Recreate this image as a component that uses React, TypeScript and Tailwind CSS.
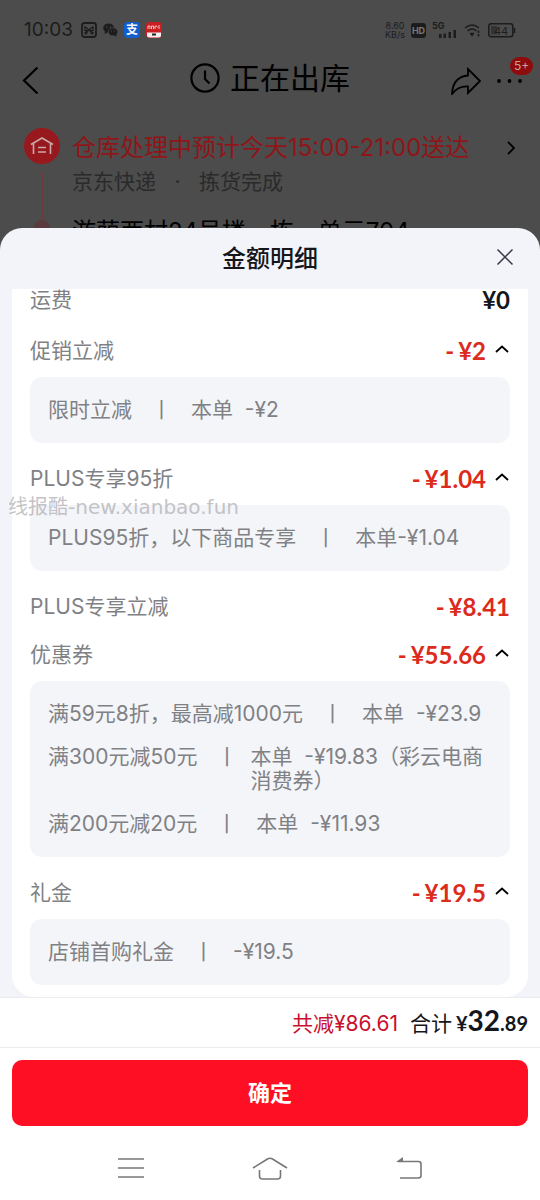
import type { ReactNode } from 'react';

type Detail = { label: string; value: string; narrow?: boolean };
type Item = { label: string; amount: string; details?: Detail[]; mark?: string };

const items: Item[] = [
  { label: '促销立减', amount: '¥2', details: [{ label: '限时立减', value: '本单  -¥2' }] },
  {
    label: 'PLUS专享95折',
    amount: '¥1.04',
    mark: '线报酷-new.xianbao.fun',
    details: [{ label: 'PLUS95折，以下商品专享', value: '本单-¥1.04' }],
  },
  { label: 'PLUS专享立减', amount: '¥8.41' },
  {
    label: '优惠券',
    amount: '¥55.66',
    details: [
      { label: '满59元8折，最高减1000元', value: '本单  -¥23.9' },
      { label: '满300元减50元', value: '本单  -¥19.83（彩云电商消费券）', narrow: true },
      { label: '满200元减20元', value: '本单  -¥11.93' },
    ],
  },
  { label: '礼金', amount: '¥19.5', details: [{ label: '店铺首购礼金', value: '-¥19.5' }] },
];

function StatusBar() {
  return (
    <div className="flex h-14 items-center px-6 pt-1 text-[#1c1c1c]">
      <span className="text-[19px] leading-6">10:03</span>
      <svg className="ml-2 h-4 w-4" viewBox="0 0 16 16" fill="none" stroke="currentColor">
        <rect x="1" y="1" width="14" height="14" rx="2.5" strokeWidth="1.8" />
        <path d="M4 4.5 12 11.5M12 4.5 4 11.5M4 4v4.5h3M12 4v4.5H9" strokeWidth="1.2" />
        <circle cx="5" cy="11" r="1.2" />
        <circle cx="11" cy="11" r="1.2" />
      </svg>
      <svg className="ml-1.5 h-4 w-[15px]" viewBox="0 0 15 16">
        <ellipse cx="5.6" cy="6" rx="5.4" ry="4.6" fill="currentColor" />
        <path d="M2 9 1.6 12l3-1.6z" fill="currentColor" />
        <ellipse cx="10" cy="9.8" rx="4.8" ry="4" fill="currentColor" stroke="#4c4c4c" strokeWidth=".7" />
        <path d="m11 13 2.6 1.8-.4-2.6z" fill="currentColor" />
        <g fill="#4c4c4c">
          <circle cx="3.8" cy="5" r=".7" />
          <circle cx="7.4" cy="5" r=".7" />
          <circle cx="8.5" cy="9" r=".6" />
          <circle cx="11.6" cy="9" r=".6" />
        </g>
      </svg>
      <span className="ml-1.5 flex h-4 w-4 items-center justify-center rounded-sm bg-[#0f5fd0] text-xs font-bold text-gray-100">支</span>
      <svg className="ml-1.5 h-4 w-4 rounded bg-[#c91f22]" viewBox="0 0 16 16">
        <path d="M2 7V4h2v3M5.5 7V4h2v3M9 7V4h1.500l1 1.500M13 3v4" stroke="#f0c0c0" fill="none" />
        <path d="M1 10.500h14v3q0 2-2 2H3q-2 0-2-2z" fill="#f0eeee" />
        <rect x="6" y="11.500" width="4" height="2" fill="#222" />
      </svg>
      <span className="ml-auto flex flex-col items-center text-[9px] leading-[9px]">
        <span>8.60</span>
        <span>KB/s</span>
      </span>
      <span className="ml-1.5 flex h-[15px] w-[15px] items-center justify-center rounded-[3px] bg-[#1c1c1c] text-[9px] leading-none font-bold text-[#777]">HD</span>
      <svg className="ml-1.5 h-[18px] w-6" viewBox="0 0 24 18" fill="currentColor">
        <text x="0" y="8" fontSize="9" fontWeight="700">5G</text>
        <path d="M7 13h2.500v4H7zM11.500 12.500H14V17h-2.500zM16.500 11H19v6h-2.500zM21.500 9H24v8h-2.500z" />
      </svg>
      <svg className="ml-2 h-4 w-[18px]" viewBox="0 0 18 16" fill="none" stroke="currentColor" strokeWidth="1.600">
        <path d="M1 6q7-6 14 0M3.500 9q4.500-4 9 0" />
        <path d="m5.500 11.500 2.500 3 2.500-3q-2.500-2-5 0z" fill="currentColor" stroke="none" />
        <path d="M14.500 8.500v2.500M14.500 12v2.500" />
      </svg>
      <svg className="ml-1.5 h-[15px] w-7" viewBox="0 0 28 15">
        <rect x=".800" y=".800" width="24" height="13" rx="2.500" fill="none" stroke="currentColor" strokeWidth="1.500" />
        <path d="M3 3h6v8.500H3z" fill="#333" />
        <path d="M26.500 5v5" stroke="currentColor" strokeWidth="1.500" />
        <text x="6" y="11.500" fontSize="11" fill="currentColor">44</text>
      </svg>
    </div>
  );
}

function OrderPage() {
  return (
    <div className="h-[252px] overflow-hidden bg-[#4c4c4c] text-black">
      <StatusBar />
      <header className="flex h-11 items-center justify-between px-4">
        <button aria-label="返回" className="flex w-[74px] pl-1">
          <svg className="mt-1 h-7 w-5" viewBox="0 0 20 28" fill="none" stroke="currentColor" strokeWidth="2.200">
            <path d="M17.500 1.500 4 14.500l13.500 13" />
          </svg>
        </button>
        <h1 className="flex items-center gap-2.5 text-[30px] leading-10">
          <svg className="h-[30px] w-[30px]" viewBox="0 0 30 30" fill="none" stroke="currentColor" strokeWidth="2.200">
            <circle cx="15" cy="15" r="13.600" />
            <path d="M15 7.500V16l4.500 4.500" />
          </svg>
          正在出库
        </h1>
        <div className="flex w-[74px] items-center gap-3.5 pt-1.5">
          <button aria-label="分享">
            <svg className="h-7 w-8" viewBox="0 0 32 28" fill="none" stroke="currentColor" strokeWidth="1.800" strokeLinejoin="miter">
              <path d="M18 2v6.500C7 9.500 2.500 17 2 27q6-8 16-7.500V26l12-12z" />
            </svg>
          </button>
          <button aria-label="更多" className="relative">
            <svg className="h-6 w-7" viewBox="0 0 28 24" fill="currentColor">
              <circle cx="3" cy="12" r="1.900" />
              <circle cx="13.500" cy="12" r="1.900" />
              <circle cx="24" cy="12" r="1.900" />
            </svg>
            <span className="absolute -top-3 left-3.5 flex h-[18px] w-[23px] items-center justify-center rounded-full bg-[#8f0c0c] text-xs text-[#c9a0a0]">5+</span>
          </button>
        </div>
      </header>
      <div className="flex px-6 pt-7">
        <div className="flex w-9 flex-col items-center">
          <span className="flex h-9 w-9 shrink-0 items-center justify-center rounded-full bg-[#98191d]">
            <svg className="h-6 w-6" viewBox="0 0 24 24" fill="none" stroke="#c9a8a8" strokeWidth="1.600">
              <path d="M1 10.500 12 4l11 6.500M3.500 9.500V20M20.500 9.500V20M8 13.500h8M8 18h8" />
            </svg>
          </span>
          <span className="mt-2 h-12 w-px bg-[#6b3a3c]" />
          <span className="h-4 w-4 shrink-0 rounded-full bg-[#5a3a3c]" />
        </div>
        <div className="ml-3 flex-1">
          <a href="#delivery" className="flex items-center justify-between text-2xl leading-10 text-[#8f1518]">
            仓库处理中预计今天15:00-21:00送达
            <svg className="h-3.5 w-2.5" viewBox="0 0 10 14" fill="none" stroke="black" strokeWidth="1.800">
              <path d="m2 1 6 6-6 6" />
            </svg>
          </a>
          <p className="text-[21px] leading-7 whitespace-pre text-[#2a2a2a]">京东快递<span className="inline-block w-[43px] text-center">·</span>拣货完成</p>
          <p className="mt-5 text-2xl leading-8">游荫西村24号楼一栋一单元704</p>
        </div>
      </div>
    </div>
  );
}

function Row({ label, children }: { label: string; children: ReactNode }) {
  return (
    <div className="flex h-12 items-center justify-between">
      <span>{label}</span>
      <span className="flex items-center font-['Lato','Noto_Sans_CJK_SC',sans-serif] text-2xl leading-8 font-bold">{children}</span>
    </div>
  );
}

function PriceItem({ item }: { item: Item }) {
  return (
    <section className="relative">
      <Row label={item.label}>
        <span className="flex gap-1 text-[#dc2b1c]">
          <span>-</span>
          {item.amount}
        </span>
        {item.details && (
          <button aria-label="收起" className="ml-2 flex h-8 w-4 justify-center pt-2.5 text-black">
            <svg className="h-2 w-3.5" viewBox="0 0 14 8" fill="none" stroke="currentColor" strokeWidth="1.800">
              <path d="m1 7 6-5.500L13 7" />
            </svg>
          </button>
        )}
      </Row>
      {item.details && (
        <div className="mt-0.5 mb-3 flex flex-col gap-[19px] rounded-xl bg-[#f4f5f9] px-[18px] py-[21px]">
          {item.details.map((d) => (
            <div key={d.label} className="flex">
              <span className="shrink-0">{d.label}</span>
              <span className={d.narrow ? 'w-[53px] shrink-0 pl-[19px]' : 'w-[59px] shrink-0 pl-[19px]'}>丨</span>
              <span className="whitespace-pre-wrap">{d.value}</span>
            </div>
          ))}
        </div>
      )}
      {item.mark && (
        <span className="absolute top-10 -left-[22px] font-['DejaVu_Sans','Noto_Sans_CJK_SC',sans-serif] text-xl leading-6 whitespace-nowrap text-[#b4b4b8]/80">
          {item.mark}
        </span>
      )}
    </section>
  );
}

export default function App() {
  return (
    <div lang="zh-CN" className="flex min-h-screen flex-col bg-white font-['Inter','Noto_Sans_CJK_SC',sans-serif]">
      <OrderPage />
      <main className="relative -mt-6 rounded-t-[22px] bg-[#f3f4f9]">
        <div className="relative flex h-[61px] items-center justify-center">
          <h2 className="text-2xl leading-8 font-medium text-[#15161c]">金额明细</h2>
          <button aria-label="关闭" className="absolute top-5 right-[26px]">
            <svg className="h-[18px] w-[18px]" viewBox="0 0 18 18" fill="none" stroke="#3c3d44" strokeWidth="1.500">
              <path d="m1.500 1.500 15 15M16.500 1.500l-15 15" />
            </svg>
          </button>
        </div>
        <div className="mx-3 flex flex-col rounded-b-[22px] bg-white px-[18px] text-[21px] leading-6 text-[#808185]">
          <div className="mb-4 flex h-[22px] items-center justify-between">
            <span>运费</span>
            <span className="font-['Lato','Noto_Sans_CJK_SC',sans-serif] text-2xl leading-6 font-bold text-[#15161c]">¥0</span>
          </div>
          {items.map((item) => (
            <PriceItem key={item.label} item={item} />
          ))}
        </div>
      </main>
      <footer>
        <div className="flex h-[51px] items-baseline justify-end gap-3 border-y border-[#ececee] px-3 pt-1.5 text-[21px] leading-8">
          <span className="text-[#c8102e]">共减¥86.61</span>
          <span className="flex items-baseline gap-1 text-[#15161c]">
            合计
            <span className="font-['Lato',sans-serif] text-xl font-bold">
              ¥<span className="text-[28px] leading-8">32</span>.89
            </span>
          </span>
        </div>
        <div className="px-3 pt-3">
          <button className="h-[66px] w-full rounded-[10px] bg-[#ff0f23] text-[22px] font-bold text-white">确定</button>
        </div>
        <nav className="flex h-[84px] items-center justify-center gap-[20%] text-[#777]">
          <button aria-label="最近任务">
            <svg className="h-5 w-[26px]" viewBox="0 0 26 20" fill="none" stroke="currentColor" strokeWidth="1.600">
              <path d="M0 1h26M0 10h26M0 19h26" />
            </svg>
          </button>
          <button aria-label="主屏幕">
            <svg className="h-6 w-9" viewBox="0 0 36 24" fill="none" stroke="currentColor" strokeWidth="1.600">
              <path d="M1 12 15.500 3q2.500-1.500 5 0L35 12" />
              <path d="M7.500 14v6q0 3 3 3h15q3 0 3-3v-6" />
            </svg>
          </button>
          <button aria-label="返回上一级">
            <svg className="h-[22px] w-[26px]" viewBox="0 0 26 22" fill="none" stroke="currentColor" strokeWidth="1.600">
              <path d="M2 4.500h20.500q2.500 0 2.500 2.500v11.500q0 2.500-2.500 2.500H4" />
              <path d="m0 5 7-5v5z" fill="currentColor" stroke="none" />
            </svg>
          </button>
        </nav>
      </footer>
    </div>
  );
}
